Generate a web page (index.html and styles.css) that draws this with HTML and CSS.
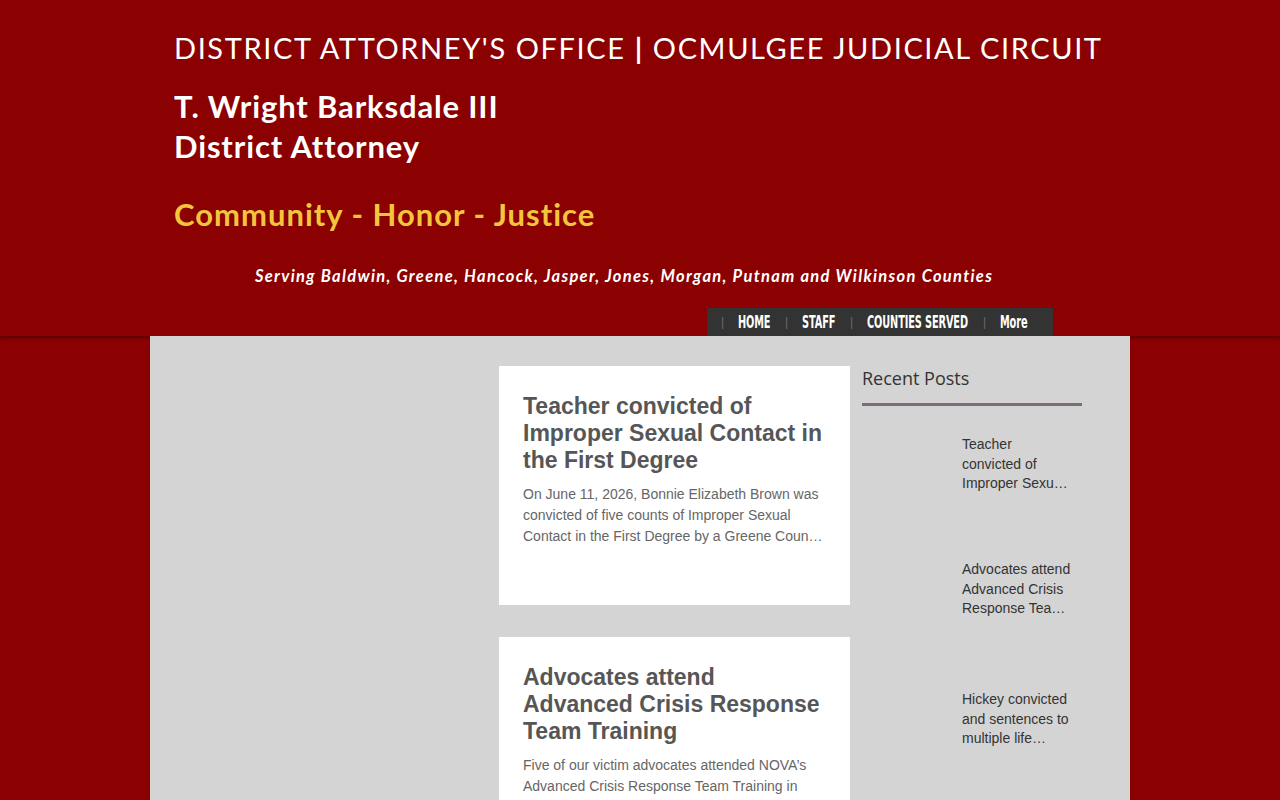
FILE: index.html
```html
<!DOCTYPE html>
<html>
<head>
<meta charset="utf-8">
<link rel="stylesheet" href="styles.css">
</head>
<body>
<header class="site-header">
  <div class="header-inner">
    <div class="office">DISTRICT ATTORNEY'S OFFICE <b>|</b> OCMULGEE JUDICIAL CIRCUIT</div>
    <div class="da-name">T. Wright Barksdale III<br>District Attorney</div>
    <div class="motto">Community - Honor - Justice</div>
    <div class="serving">Serving Baldwin, Greene, Hancock, Jasper, Jones, Morgan, Putnam and Wilkinson Counties</div>
    <nav class="nav">
      <span class="sep">|</span><a class="nav-item w-home"><span>HOME</span></a>
      <span class="sep">|</span><a class="nav-item w-staff"><span>STAFF</span></a>
      <span class="sep">|</span><a class="nav-item w-counties"><span>COUNTIES SERVED</span></a>
      <span class="sep">|</span><a class="nav-item w-more"><span>More</span></a>
    </nav>
  </div>
</header>
<main class="content">
  <div class="spacer"></div>
  <div class="feed">
    <article class="card">
      <h2 class="card-title">Teacher convicted of Improper Sexual Contact in the First Degree</h2>
      <p class="card-text">On June 11, 2026, Bonnie Elizabeth Brown was convicted of five counts of Improper Sexual Contact in the First Degree by a Greene Coun…</p>
    </article>
    <article class="card">
      <h2 class="card-title">Advocates attend Advanced Crisis Response Team Training</h2>
      <p class="card-text">Five of our victim advocates attended NOVA’s Advanced Crisis Response Team Training in Lexington, Kentucky this month.</p>
    </article>
  </div>
  <aside class="sidebar">
    <h3 class="side-title">Recent Posts</h3>
    <div class="side-rule"></div>
    <div class="side-item"><div class="thumb"></div><div class="side-text">Teacher convicted of Improper Sexu…</div></div>
    <div class="side-item side-item-tall"><div class="thumb"></div><div class="side-text">Advocates attend Advanced Crisis Response Tea…</div></div>
    <div class="side-item"><div class="thumb"></div><div class="side-text">Hickey convicted and sentences to multiple life…</div></div>
  </aside>
</main>
</body>
</html>
```
FILE: styles.css
```css
html, body {
  margin: 0;
  padding: 0;
  background: #8b0000;
  height: 100%;
  overflow: hidden;
}
.site-header {
  height: 336px;
  background: #8b0000;
  box-shadow: 0 2px 3px rgba(0,0,0,0.35);
  position: relative;
  z-index: 1;
}
.header-inner {
  width: 980px;
  margin: 0 auto;
  padding: 30px 0 0 24px;
  box-sizing: border-box;
  height: 336px;
  display: flex;
  flex-direction: column;
  font-family: Lato, "Open Sans", sans-serif;
  color: #fff;
}
.office {
  font-size: 29px;
  font-weight: 400;
  letter-spacing: 1.6px;
  line-height: 36px;
  white-space: nowrap;
}
.office b { font-weight: 700; }
.da-name {
  margin-top: 20px;
  font-size: 31px;
  font-weight: 700;
  letter-spacing: 0.85px;
  line-height: 40px;
}
.motto {
  margin-top: 28px;
  font-size: 31px;
  font-weight: 700;
  letter-spacing: 1px;
  color: #f2c53d;
  line-height: 40px;
}
.serving {
  margin-top: 32px;
  font-size: 16.5px;
  font-weight: 700;
  font-style: italic;
  letter-spacing: 1.3px;
  line-height: 20px;
  padding-left: 81px;
  white-space: nowrap;
}
.nav {
  margin-top: auto;
  align-self: flex-start;
  margin-left: 533px;
  height: 28px;
  width: 346px;
  background: #333333;
  display: flex;
  align-items: center;
  box-sizing: border-box;
  padding-left: 14px;
  font-family: "DejaVu Sans", sans-serif;
}
.sep {
  color: #6a6a6a;
  font-size: 12px;
  width: 17px;
  flex: none;
  font-family: "Liberation Sans", sans-serif;
}
.nav-item {
  display: block;
  color: #fff;
  font-size: 17px;
  font-weight: 700;
  margin-right: 14px;
  white-space: nowrap;
  flex: none;
  line-height: 28px;
}
.nav-item span {
  display: inline-block;
  transform: scaleX(0.575);
  transform-origin: left center;
  letter-spacing: -0.2px;
}
.w-home { width: 33px; }
.w-staff { width: 34px; }
.w-counties { width: 102px; }
.w-more { width: 30px; }
.content {
  width: 980px;
  margin: 0 auto;
  background: #d4d4d4;
  height: 464px;
  display: flex;
  position: relative;
  z-index: 2;
  overflow: hidden;
}
.spacer { width: 349px; flex: none; }
.feed {
  width: 351px;
  flex: none;
  padding-top: 30px;
  display: flex;
  flex-direction: column;
  gap: 32px;
}
.card {
  background: #fff;
  height: 239px;
  padding: 27px 24px 0 24px;
  box-sizing: border-box;
  flex: none;
}
.card-title {
  margin: 0;
  font-family: "Liberation Sans", Arial, sans-serif;
  font-weight: 700;
  font-size: 23px;
  line-height: 27px;
  color: #565656;
}
.card-text {
  margin: 10px 0 0 0;
  font-family: "Liberation Sans", Arial, sans-serif;
  font-size: 14px;
  line-height: 21px;
  color: #666;
}
.sidebar {
  margin-left: 12px;
  width: 220px;
  padding-top: 30px;
}
.side-title {
  margin: 0;
  font-family: "Open Sans", sans-serif;
  font-weight: 400;
  font-size: 18px;
  line-height: 24px;
  color: #333;
}
.side-rule {
  height: 3px;
  background: #7c6c7e;
  margin-top: 13px;
}
.side-item {
  display: flex;
  height: 125px;
  padding-top: 29px;
  box-sizing: border-box;
}
.side-item-tall { height: 130px; }
.thumb { width: 100px; flex: none; }
.side-text {
  font-family: "Liberation Sans", Arial, sans-serif;
  font-size: 14px;
  line-height: 19.5px;
  color: #333;
  width: 110px;
}
```
